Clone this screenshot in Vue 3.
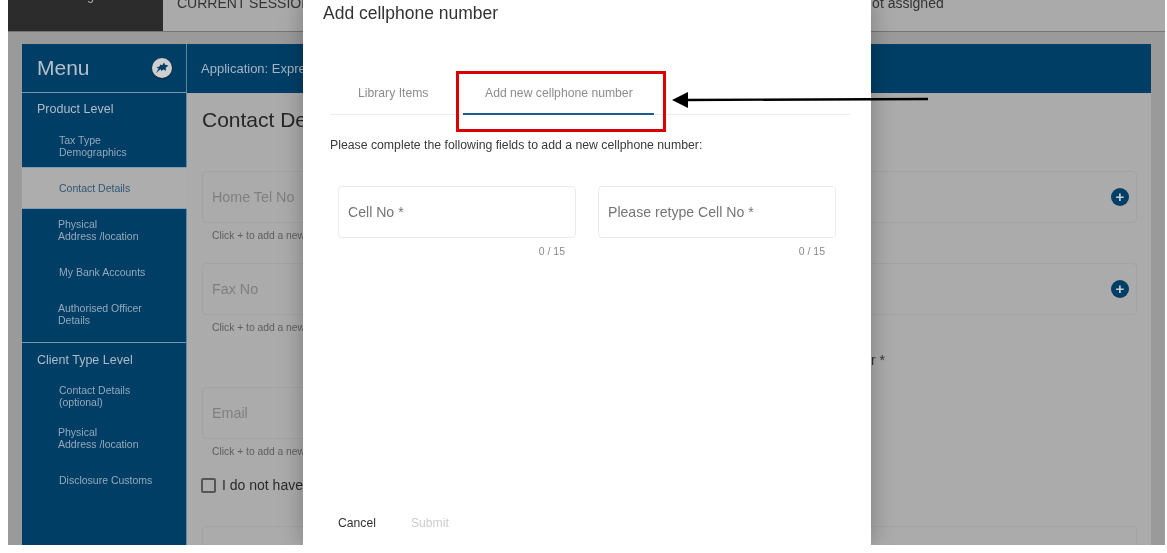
<script setup>
const productItems = [
  { lines: ["Tax Type", "Demographics"] },
  { lines: ["Contact Details"], active: true },
  { lines: ["Physical", "Address /location"], shift: true },
  { lines: ["My Bank Accounts"] },
  { lines: ["Authorised Officer", "Details"], shift: true },
];

const clientItems = [
  { lines: ["Contact Details", "(optional)"] },
  { lines: ["Physical", "Address /location"], shift: true },
  { lines: ["Disclosure Customs"] },
];

const cellFields = [
  { label: "Cell No *" },
  { label: "Please retype Cell No *" },
];
</script>

<template>
  <div class="screen">
    <header class="topbar">
      <div class="brand"><span>Login</span></div>
      <div class="session">
        <span class="session-label">CURRENT SESSION</span>
        <span>Not assigned</span>
      </div>
    </header>

    <div class="panel">
      <aside class="sidebar">
        <div class="menu-head">
          <span class="menu-title">Menu</span>
          <span class="pin">
            <svg width="16" height="14" viewBox="0 0 16 14">
              <path d="M10 1.5l1 2.3 3.5.7-2.8 2.2.3 3-2.6-1.2-2.2 1.4-.6-1.8L2 12l2.6-4.4L2.4 6.4l3.2-.8.6-2 2 .6z" fill="#003e66" />
            </svg>
          </span>
        </div>
        <div class="group-title">Product Level</div>
        <div
          v-for="(item, index) in productItems"
          :key="index"
          class="menu-item"
          :class="{ active: item.active, shift: item.shift }"
        >
          <span v-for="line in item.lines" :key="line">{{ line }}</span>
        </div>
        <div class="divider"></div>
        <div class="group-title">Client Type Level</div>
        <div
          v-for="(item, index) in clientItems"
          :key="'c' + index"
          class="menu-item"
          :class="{ shift: item.shift }"
        >
          <span v-for="line in item.lines" :key="line">{{ line }}</span>
        </div>
      </aside>

      <main class="content">
        <div class="app-bar">Application: Express Registration</div>
        <div class="form">
          <h1 class="form-title">Contact Details</h1>

          <div class="field">
            <span>Home Tel No</span>
            <span class="plus">+</span>
          </div>
          <p class="hint">Click + to add a new number</p>

          <div class="field second">
            <span>Fax No</span>
            <span class="plus">+</span>
          </div>
          <p class="hint">Click + to add a new number</p>

          <div class="email-row">
            <div class="email-col">
              <div class="field">
                <span>Email</span>
              </div>
              <p class="hint">Click + to add a new email</p>
            </div>
            <div class="preferred">Preferred contact number *</div>
          </div>

          <label class="check-row">
            <span class="check"></span>
            I do not have an email address
          </label>

          <div class="field last"></div>
        </div>
      </main>
    </div>

    <div class="modal">
      <h2 class="modal-title">Add cellphone number</h2>
      <div class="tabs">
        <div class="tab">Library Items</div>
        <div class="tab current">Add new cellphone number</div>
      </div>
      <p class="intro">Please complete the following fields to add a new cellphone number:</p>
      <div class="cell-fields">
        <div v-for="field in cellFields" :key="field.label" class="cell-field">
          <div class="cell-box">{{ field.label }}</div>
          <div class="counter">0 / 15</div>
        </div>
      </div>
      <div class="actions">
        <span class="cancel">Cancel</span>
        <span class="submit">Submit</span>
      </div>
    </div>

    <div class="red-box"></div>
    <svg class="arrow" width="262" height="20" viewBox="0 0 262 20">
      <path d="M14 10L256 9" stroke="#000" stroke-width="2.4" fill="none" />
      <path d="M0 10L16 2V18Z" fill="#000" />
    </svg>
  </div>
</template>

<style scoped>
.screen {
  position: relative;
  width: 1157px;
  height: 545px;
  margin-left: 8px;
  overflow: hidden;
  background: #9a9a9a;
  font-family: "Liberation Sans", Arial, sans-serif;
  filter: blur(0.35px);
}

.topbar {
  display: flex;
  height: 31px;
  border-bottom: 1px solid #757575;
  box-sizing: content-box;
}

.brand {
  width: 155px;
  background: #2c2c2c;
  color: #b5b5b5;
  font-size: 12px;
  line-height: 12px;
  padding-left: 66px;
  box-sizing: border-box;
  overflow: hidden;
}

.brand span {
  display: block;
  margin-top: -10px;
}

.session {
  flex: 1;
  display: flex;
  background: #aaaaaa;
  color: #333;
  font-size: 14px;
  line-height: 14px;
  padding-left: 14px;
  overflow: hidden;
}

.session span {
  margin-top: -4px;
  height: 14px;
}

.session .session-label {
  width: 685px;
}

.panel {
  display: flex;
  margin: 12px 14px 0;
  height: 502px;
}

.sidebar {
  width: 165px;
  flex: none;
  background: #003e66;
  color: #a4b4c2;
  border-right: 1px solid #5d87a3;
  box-sizing: border-box;
}

.menu-head {
  height: 49px;
  display: flex;
  align-items: center;
  justify-content: space-between;
  padding: 0 14px 1px 15px;
  border-bottom: 1px solid #7799b0;
  box-sizing: border-box;
}

.menu-title {
  font-size: 21px;
  color: #b4c1cc;
}

.pin {
  width: 20px;
  height: 20px;
  border-radius: 50%;
  background: #cfcfcf;
  display: flex;
  align-items: center;
  justify-content: center;
  box-shadow: 0 1px 2px rgba(0, 0, 0, 0.4);
}

.group-title {
  height: 32px;
  display: flex;
  align-items: center;
  padding-left: 15px;
  font-size: 12.5px;
  color: #aebcc8;
}

.divider + .group-title {
  padding-top: 1px;
  box-sizing: border-box;
}

.menu-item {
  height: 42px;
  display: flex;
  flex-direction: column;
  justify-content: center;
  padding-left: 37px;
  font-size: 10.5px;
  line-height: 12px;
  color: #95a9ba;
}

.menu-item.shift {
  padding-left: 36px;
}

.menu-item.active {
  background: #adadad;
  color: #2f5573;
  border-top: 1px solid #7c9db5;
  border-bottom: 1px solid #7c9db5;
  box-sizing: border-box;
  margin-right: -1px;
}

.divider {
  height: 1px;
  margin-top: 7px;
  background: #7799b0;
}

.content {
  flex: 1;
  min-width: 0;
  background: #ababab;
}

.app-bar {
  height: 49px;
  background: #003e66;
  color: #a4b4c2;
  font-size: 13px;
  line-height: 49px;
  padding-left: 14px;
}

.form {
  padding: 0 14px 0 15px;
}

.form-title {
  margin: 0;
  padding-top: 14px;
  font-size: 21px;
  line-height: 26px;
  font-weight: 400;
  color: #262626;
}

.field {
  height: 52px;
  margin-top: 38px;
  padding: 0 7px 0 9px;
  display: flex;
  align-items: center;
  justify-content: space-between;
  border: 1px solid #a3a3a3;
  border-radius: 4px;
  box-sizing: border-box;
  font-size: 14.3px;
  color: #7f7f7f;
}

.field.second {
  margin-top: 20px;
}

.plus {
  width: 18px;
  height: 18px;
  border-radius: 50%;
  background: #003e66;
  color: #c3ced6;
  font-size: 15px;
  font-weight: 700;
  line-height: 17px;
  text-align: center;
}

.hint {
  margin: 6px 0 0 10px;
  font-size: 10.3px;
  line-height: 14px;
  color: #5e5e5e;
  white-space: nowrap;
}

.email-row {
  display: flex;
  margin-top: 17px;
}

.email-col {
  width: 400px;
}

.email-col .field {
  margin-top: 35px;
}

.preferred {
  width: 283px;
  font-size: 14px;
  line-height: 16px;
  text-align: right;
  color: #333;
  white-space: nowrap;
}

.check-row {
  display: flex;
  align-items: center;
  gap: 6px;
  margin: 18px 0 0 -1px;
  font-size: 14px;
  line-height: 16px;
  color: #2a2a2a;
  white-space: nowrap;
}

.check {
  width: 11px;
  height: 11px;
  border: 2px solid #555;
  border-radius: 2px;
}

.field.last {
  margin-top: 33px;
}

.modal {
  position: absolute;
  left: 295px;
  top: 0;
  width: 568px;
  height: 545px;
  background: #fff;
  box-shadow: 0 0 22px rgba(0, 0, 0, 0.28);
}

.modal-title {
  margin: 0;
  padding: 3px 0 0 20px;
  font-size: 17.5px;
  line-height: 20px;
  font-weight: 400;
  color: #333;
}

.tabs {
  display: flex;
  margin: 49px 21px 0 27px;
  height: 43px;
  border-bottom: 1px solid #eeeeee;
  box-sizing: border-box;
}

.tab {
  padding: 0 21px 0 28px;
  line-height: 42px;
  font-size: 12.2px;
  color: #8c8c8c;
  white-space: nowrap;
}

.tab.current {
  position: absolute;
  left: 160px;
  width: 191px;
  padding: 0 0 0 22px;
  height: 43px;
  box-sizing: border-box;
  border-bottom: 2px solid #1a5a96;
}

.intro {
  margin: 22px 0 0 27px;
  font-size: 12.28px;
  line-height: 16px;
  color: #3a3a3a;
}

.cell-fields {
  display: flex;
  gap: 22px;
  margin: 33px 35px 0;
}

.cell-field {
  width: 238px;
}

.cell-box {
  height: 52px;
  padding-left: 9px;
  line-height: 51px;
  border: 1px solid #ebebeb;
  border-radius: 4px;
  box-sizing: border-box;
  font-size: 14.1px;
  color: #757575;
}

.counter {
  margin-top: 6px;
  padding-right: 11px;
  text-align: right;
  font-size: 10.5px;
  line-height: 14px;
  color: #8a8a8a;
}

.actions {
  position: absolute;
  left: 35px;
  top: 516px;
  display: flex;
  gap: 35px;
  font-size: 12.2px;
  line-height: 14px;
}

.cancel {
  color: #333;
}

.submit {
  color: #cccccc;
}

.red-box {
  position: absolute;
  left: 448px;
  top: 71px;
  width: 210px;
  height: 61px;
  border: 3px solid #d90000;
  box-sizing: border-box;
}

.arrow {
  position: absolute;
  left: 664px;
  top: 90px;
}
</style>
